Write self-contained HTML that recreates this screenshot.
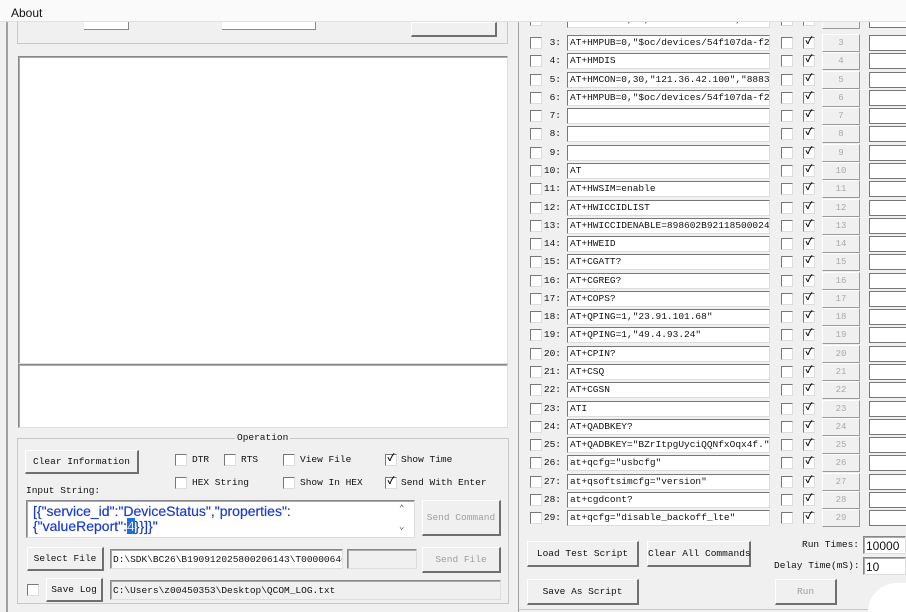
<!DOCTYPE html>
<html style="overflow:hidden;width:906px;height:612px"><head><meta charset="utf-8"><style>
*{box-sizing:border-box;margin:0;padding:0}
body{width:906px;height:612px;overflow:hidden;background:#f0f0f0;position:relative;font-family:"Liberation Mono","Noto Sans CJK SC",monospace;font-size:9.5px;color:#111}
.a{position:absolute;white-space:nowrap}
.sunk{position:absolute;background:#fff;border:1px solid #888;border-right-color:#ddd;border-bottom-color:#ddd;box-shadow:inset 1px 1px 0 #aaa;white-space:nowrap;overflow:hidden}
.btn{position:absolute;background:#f0f0f0;border:1px solid #fff;border-right:2px solid #707070;border-bottom:2px solid #707070;text-align:center;white-space:nowrap}
.dis{color:#a0a0a0}
.cb{position:absolute;width:12px;height:12px;background:#fff;border:1px solid #777;border-right-color:#ddd;border-bottom-color:#ddd;font-size:10px;line-height:10px;text-align:center;font-weight:bold}
.row{position:absolute;left:0;width:391px;height:18px}
.row .cb{top:3px;left:15px}
.row .c2{left:266px}
.row .c3{left:288px}
.row .n{position:absolute;left:22px;top:3px;width:24px;text-align:right}
.row .t{position:absolute;left:52px;top:1px;width:203px;height:16px;background:#fff;border:1px solid #777;border-right-color:#ddd;border-bottom-color:#ddd;line-height:14px;padding-left:2px;white-space:nowrap;overflow:hidden}
.row .b{position:absolute;left:307px;top:0;width:38px;height:18px;background:#f0f0f0;border:1px solid #fff;border-right:1px solid #999;border-bottom:1px solid #999;color:#aaa;text-align:center;font-size:9px;line-height:16px}
.row .f{position:absolute;left:354px;top:1px;width:40px;height:16px;background:#fff;border:1px solid #777}
</style></head><body>
<div class="a" style="left:6px;top:22px;width:2px;height:590px;background:#a0a0a0"></div>
<div class="a" style="left:17px;top:22px;width:491px;height:22px;border:1px solid #c8c8c8;border-top:none"></div>
<div class="a" style="left:84px;top:22px;width:45px;height:8px;background:#fff;border-bottom:1px solid #888;border-right:1px solid #888"></div>
<div class="a" style="left:222px;top:22px;width:94px;height:8px;background:#fff;border-bottom:1px solid #888;border-right:1px solid #888"></div>
<div class="btn" style="left:411px;top:22px;width:86px;height:15px"></div>
<div class="sunk" style="left:18px;top:56px;width:490px;height:308px"></div>
<div class="sunk" style="left:18px;top:364px;width:490px;height:64px"></div>
<div class="a" style="left:17px;top:438px;width:492px;height:166px;border:1px solid #c8c8c8"></div>
<div class="a" style="left:235px;top:432px;background:#f0f0f0;padding:0 2px">Operation</div>
<div class="btn" style="left:25px;top:450px;width:114px;height:24px;line-height:21px">Clear Information</div>
<div class="cb" style="left:175px;top:454px"></div><div class="a" style="left:192px;top:454px">DTR</div>
<div class="cb" style="left:224px;top:454px"></div><div class="a" style="left:241px;top:454px">RTS</div>
<div class="cb" style="left:283px;top:454px"></div><div class="a" style="left:300px;top:454px">View File</div>
<div class="cb" style="left:385px;top:454px">✓</div><div class="a" style="left:401px;top:454px">Show Time</div>
<div class="cb" style="left:175px;top:477px"></div><div class="a" style="left:192px;top:477px">HEX String</div>
<div class="cb" style="left:283px;top:477px"></div><div class="a" style="left:300px;top:477px">Show In HEX</div>
<div class="cb" style="left:385px;top:477px">✓</div><div class="a" style="left:401px;top:477px">Send With Enter</div>
<div class="a" style="left:26px;top:485px">Input String:</div>
<div class="sunk" style="left:26px;top:500px;width:389px;height:38px;font-family:'Liberation Sans',sans-serif;font-size:14px;color:#1a3bd0;line-height:15px;padding:3px 0 0 6px;-webkit-text-stroke:0.2px #1a3bd0">[{"service_id":"DeviceStatus","properties":<br>{"valueReport":<span style="background:#1e6fd8;color:#fff">4</span>}}]}"</div>
<div class="a" style="left:399px;top:504px;font-size:9px;color:#555">⌃</div>
<div class="a" style="left:399px;top:522px;font-size:9px;color:#555">⌄</div>
<div class="btn dis" style="left:422px;top:500px;width:79px;height:36px;line-height:33px">Send Command</div>
<div class="btn" style="left:27px;top:547px;width:77px;height:24px;line-height:21px">Select File</div>
<div class="sunk" style="left:110px;top:549px;width:233px;height:20px;padding:4px 0 0 2px">D:\SDK\BC26\B190912025800206143\T00000646</div>
<div class="sunk" style="left:347px;top:549px;width:70px;height:20px;background:#f0f0f0"></div>
<div class="btn dis" style="left:422px;top:547px;width:79px;height:26px;line-height:23px">Send File</div>
<div class="cb" style="left:27px;top:584px"></div>
<div class="btn" style="left:46px;top:578px;width:57px;height:24px;line-height:21px">Save Log</div>
<div class="sunk" style="left:110px;top:580px;width:391px;height:20px;background:#f0f0f0;padding:4px 0 0 2px">C:\Users\z00450353\Desktop\QCOM_LOG.txt</div>
<div class="a" style="left:518px;top:22px;width:1px;height:590px;background:#a0a0a0"></div>
<div class="a" style="left:519px;top:22px;width:387px;height:588px;border-bottom:1px solid #c8c8c8"></div>
<div class="a" style="left:515px;top:22px;width:391px;height:510px;overflow:hidden">
<div class="row" style="top:-11px"><div class="cb"></div><div class="n">2:</div><div class="t">AT+HMCON=0,30,"121.36.42.100","8883"</div><div class="cb c2"></div><div class="cb c3">✓</div><div class="b">2</div><div class="f"></div></div>
<div class="row" style="top:12px"><div class="cb"></div><div class="n">3:</div><div class="t">AT+HMPUB=0,"$oc/devices/54f107da-f25</div><div class="cb c2"></div><div class="cb c3">✓</div><div class="b">3</div><div class="f"></div></div>
<div class="row" style="top:30.3px"><div class="cb"></div><div class="n">4:</div><div class="t">AT+HMDIS</div><div class="cb c2"></div><div class="cb c3">✓</div><div class="b">4</div><div class="f"></div></div>
<div class="row" style="top:48.5px"><div class="cb"></div><div class="n">5:</div><div class="t">AT+HMCON=0,30,"121.36.42.100","8883"</div><div class="cb c2"></div><div class="cb c3">✓</div><div class="b">5</div><div class="f"></div></div>
<div class="row" style="top:66.8px"><div class="cb"></div><div class="n">6:</div><div class="t">AT+HMPUB=0,"$oc/devices/54f107da-f25</div><div class="cb c2"></div><div class="cb c3">✓</div><div class="b">6</div><div class="f"></div></div>
<div class="row" style="top:85.1px"><div class="cb"></div><div class="n">7:</div><div class="t"></div><div class="cb c2"></div><div class="cb c3">✓</div><div class="b">7</div><div class="f"></div></div>
<div class="row" style="top:103.4px"><div class="cb"></div><div class="n">8:</div><div class="t"></div><div class="cb c2"></div><div class="cb c3">✓</div><div class="b">8</div><div class="f"></div></div>
<div class="row" style="top:121.6px"><div class="cb"></div><div class="n">9:</div><div class="t"></div><div class="cb c2"></div><div class="cb c3">✓</div><div class="b">9</div><div class="f"></div></div>
<div class="row" style="top:139.9px"><div class="cb"></div><div class="n">10:</div><div class="t">AT</div><div class="cb c2"></div><div class="cb c3">✓</div><div class="b">10</div><div class="f"></div></div>
<div class="row" style="top:158.2px"><div class="cb"></div><div class="n">11:</div><div class="t">AT+HWSIM=enable</div><div class="cb c2"></div><div class="cb c3">✓</div><div class="b">11</div><div class="f"></div></div>
<div class="row" style="top:176.5px"><div class="cb"></div><div class="n">12:</div><div class="t">AT+HWICCIDLIST</div><div class="cb c2"></div><div class="cb c3">✓</div><div class="b">12</div><div class="f"></div></div>
<div class="row" style="top:194.7px"><div class="cb"></div><div class="n">13:</div><div class="t">AT+HWICCIDENABLE=898602B92118500024</div><div class="cb c2"></div><div class="cb c3">✓</div><div class="b">13</div><div class="f"></div></div>
<div class="row" style="top:213px"><div class="cb"></div><div class="n">14:</div><div class="t">AT+HWEID</div><div class="cb c2"></div><div class="cb c3">✓</div><div class="b">14</div><div class="f"></div></div>
<div class="row" style="top:231.3px"><div class="cb"></div><div class="n">15:</div><div class="t">AT+CGATT?</div><div class="cb c2"></div><div class="cb c3">✓</div><div class="b">15</div><div class="f"></div></div>
<div class="row" style="top:249.6px"><div class="cb"></div><div class="n">16:</div><div class="t">AT+CGREG?</div><div class="cb c2"></div><div class="cb c3">✓</div><div class="b">16</div><div class="f"></div></div>
<div class="row" style="top:267.8px"><div class="cb"></div><div class="n">17:</div><div class="t">AT+COPS?</div><div class="cb c2"></div><div class="cb c3">✓</div><div class="b">17</div><div class="f"></div></div>
<div class="row" style="top:286.1px"><div class="cb"></div><div class="n">18:</div><div class="t">AT+QPING=1,"23.91.101.68"</div><div class="cb c2"></div><div class="cb c3">✓</div><div class="b">18</div><div class="f"></div></div>
<div class="row" style="top:304.4px"><div class="cb"></div><div class="n">19:</div><div class="t">AT+QPING=1,"49.4.93.24"</div><div class="cb c2"></div><div class="cb c3">✓</div><div class="b">19</div><div class="f"></div></div>
<div class="row" style="top:322.7px"><div class="cb"></div><div class="n">20:</div><div class="t">AT+CPIN?</div><div class="cb c2"></div><div class="cb c3">✓</div><div class="b">20</div><div class="f"></div></div>
<div class="row" style="top:340.9px"><div class="cb"></div><div class="n">21:</div><div class="t">AT+CSQ</div><div class="cb c2"></div><div class="cb c3">✓</div><div class="b">21</div><div class="f"></div></div>
<div class="row" style="top:359.2px"><div class="cb"></div><div class="n">22:</div><div class="t">AT+CGSN</div><div class="cb c2"></div><div class="cb c3">✓</div><div class="b">22</div><div class="f"></div></div>
<div class="row" style="top:377.5px"><div class="cb"></div><div class="n">23:</div><div class="t">ATI</div><div class="cb c2"></div><div class="cb c3">✓</div><div class="b">23</div><div class="f"></div></div>
<div class="row" style="top:395.8px"><div class="cb"></div><div class="n">24:</div><div class="t">AT+QADBKEY?</div><div class="cb c2"></div><div class="cb c3">✓</div><div class="b">24</div><div class="f"></div></div>
<div class="row" style="top:414px"><div class="cb"></div><div class="n">25:</div><div class="t">AT+QADBKEY="BZrItpgUyciQQNfxOqx4f."</div><div class="cb c2"></div><div class="cb c3">✓</div><div class="b">25</div><div class="f"></div></div>
<div class="row" style="top:432.3px"><div class="cb"></div><div class="n">26:</div><div class="t">at+qcfg="usbcfg"</div><div class="cb c2"></div><div class="cb c3">✓</div><div class="b">26</div><div class="f"></div></div>
<div class="row" style="top:450.6px"><div class="cb"></div><div class="n">27:</div><div class="t">at+qsoftsimcfg="version"</div><div class="cb c2"></div><div class="cb c3">✓</div><div class="b">27</div><div class="f"></div></div>
<div class="row" style="top:468.9px"><div class="cb"></div><div class="n">28:</div><div class="t">at+cgdcont?</div><div class="cb c2"></div><div class="cb c3">✓</div><div class="b">28</div><div class="f"></div></div>
<div class="row" style="top:487.1px"><div class="cb"></div><div class="n">29:</div><div class="t">at+qcfg="disable_backoff_lte"</div><div class="cb c2"></div><div class="cb c3">✓</div><div class="b">29</div><div class="f"></div></div>
</div>
<div class="btn" style="left:527px;top:541px;width:112px;height:26px;line-height:23px">Load Test Script</div>
<div class="btn" style="left:647px;top:541px;width:104px;height:26px;line-height:23px">Clear All Commands</div>
<div class="a" style="left:802px;top:539px">Run Times:</div>
<div class="sunk" style="left:863px;top:536px;width:43px;height:18px;padding:2px 0 0 2px;font-family:'Liberation Sans',sans-serif;font-size:12px">10000</div>
<div class="a" style="left:774px;top:560px">Delay Time(mS):</div>
<div class="sunk" style="left:863px;top:557px;width:43px;height:18px;padding:2px 0 0 2px;font-family:'Liberation Sans',sans-serif;font-size:12px">10</div>
<div class="btn" style="left:527px;top:579px;width:112px;height:26px;line-height:23px">Save As Script</div>
<div class="btn dis" style="left:775px;top:579px;width:62px;height:26px;line-height:23px">Run</div>
<div class="a" style="left:868px;top:583px;width:38px;height:29px;background:#fff;border-radius:30px 0 0 0"></div>
<div class="a" style="left:0;top:0;width:906px;height:22px;background:#fafafa;border-bottom:1px solid #e0e0e0"></div>
<div class="a" style="left:11px;top:6px;font-family:'Liberation Sans',sans-serif;font-size:12px">About</div>
</body></html>
